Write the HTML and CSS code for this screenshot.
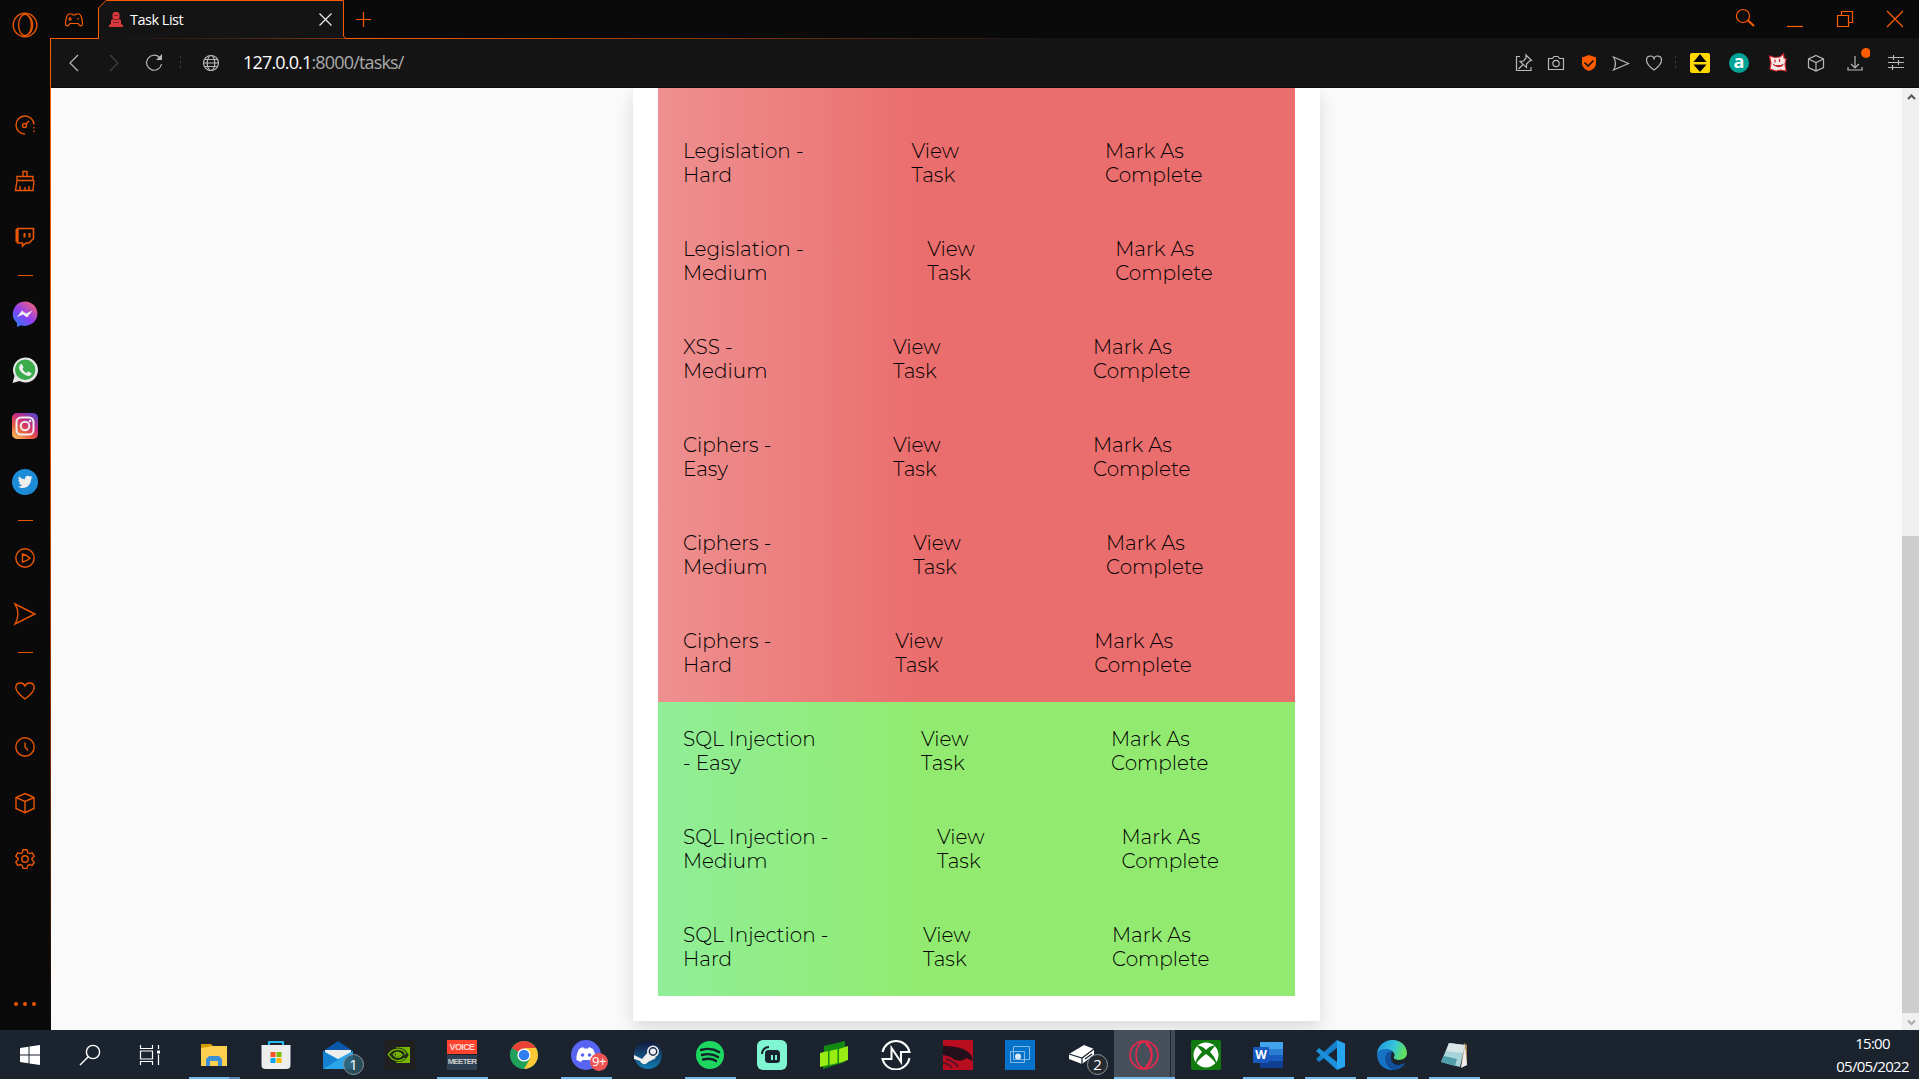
FILE: index.html
```html
<!DOCTYPE html>
<html lang="en">
<head>
<meta charset="utf-8">
<title>Task List</title>
<link rel="stylesheet" href="styles.css">
</head>
<body>
<div class="browser">
  <nav class="sidebar">
    <div class="side-logo"><svg width="26" height="26" viewBox="0 0 26 26"><circle cx="13" cy="13" r="11.8"/><ellipse cx="13" cy="13" rx="6.4" ry="10.6"/><path d="M16 3.500C22 7 22 19 16 22.500"/></svg></div>
    <div class="side-item"><svg width="22" height="22" viewBox="0 0 22 22"><path d="M11 20A9 9 0 1 1 20 10.500" /><path d="M20 13v1.500M20 16.500v1.500" /><circle cx="10.500" cy="11.500" r="2"/><path d="M12 10l3-3"/></svg></div>
    <div class="side-item"><svg width="22" height="22" viewBox="0 0 22 22"><path d="M9 6V1.500h4V6M3 6.500h16v4H3zM3 10.500L1.500 20.500H19L20 10.500M6 20v-4M11 20v-3M15 20v-4"/></svg></div>
    <div class="side-item"><svg width="22" height="22" viewBox="0 0 22 22"><path d="M3.500 2.500h16v10l-4.500 4.500H12l-3.500 3v-3h-5z" stroke-width="1.600"/><path d="M3 3v13" stroke-width="3"/><path d="M10.500 7v4.500M15.500 7v4.500" stroke-width="2"/></svg></div>
    <div class="side-rule side-rule-tall"></div>
    <div class="side-item"><svg class="brand" width="26" height="26" viewBox="0 0 26 26"><defs><linearGradient id="msg" x1="0" y1="1" x2=".8" y2="0"><stop offset="0" stop-color="#1689f5"/><stop offset=".5" stop-color="#8b3ff5"/><stop offset="1" stop-color="#f4627a"/></linearGradient></defs><path d="M13 .5a12.500 12.200 0 1 1-4 23.800L5 26v-4A12.300 12.300 0 0 1 13 .5z" fill="url(#msg)"/><path d="M5 16l5-6.500 4 3 6.500-3-5.500 7-4-3z" fill="#eee"/></svg></div>
    <div class="side-item"><svg class="brand" width="26" height="26" viewBox="0 0 26 26"><path d="M.5 26l2-7A12.500 12.500 0 1 1 7.500 24z" fill="#e8e8e8"/><circle cx="13.200" cy="12.800" r="10.200" fill="#3bab4b"/><path d="M8 7.500l2-.5 1.500 3.500-1 1.500c1 2 2 3 4 4l1.500-1.500 3.500 1.500c0 3-3 3.500-5 2.500-4-1.500-7.500-5-7.500-8z" fill="#eee"/></svg></div>
    <div class="side-item"><svg class="brand" width="26" height="26" viewBox="0 0 26 26"><defs><linearGradient id="ig" x1=".1" y1="1" x2=".8" y2="0"><stop offset="0" stop-color="#f7c15a"/><stop offset=".35" stop-color="#ea5a40"/><stop offset=".65" stop-color="#c62c83"/><stop offset="1" stop-color="#5f45c4"/></linearGradient></defs><rect width="26" height="26" rx="5" fill="url(#ig)"/><g fill="none" stroke="#eee" stroke-width="2"><rect x="4.500" y="4.500" width="17" height="17" rx="4.500"/><circle cx="13" cy="13" r="4.300"/></g><circle cx="18" cy="8" r="1.300" fill="#eee"/></svg></div>
    <div class="side-item"><svg class="brand" width="26" height="26" viewBox="0 0 26 26"><circle cx="13" cy="13" r="13" fill="#1d8cd8"/><path d="M6 17.500c2 0 3-.5 4-1.500-1.500 0-2.500-1-2.800-2l1.300-.2C7 13 6.300 12 6.400 10.500l1.200.4C6.500 10 6.300 8.500 7 7.200c1.600 2 3.600 3 6 3.100C12.500 7 16 5.500 18 7.600L20 7l-1 1.700 1.700-.4-1.600 1.700C19.300 16 13 22 6 17.500z" fill="#eee"/></svg></div>
    <div class="side-rule"></div>
    <div class="side-item"><svg width="22" height="22" viewBox="0 0 22 22"><circle cx="11" cy="11" r="9.200"/><path d="M8.500 7v8q4-.8 7.500-3.800Q12.500 8 8.500 7z"/></svg></div>
    <div class="side-item"><svg width="24" height="24" viewBox="0 0 24 24"><path d="M2 2L22 12 2 22q6-10 0-20z"/></svg></div>
    <div class="side-rule side-rule-low"></div>
    <div class="side-item"><svg width="22" height="22" viewBox="0 0 22 22"><path d="M11 19C7 16 1.800 12 1.800 7.500 1.800 2 9 1.500 11 6c2-4.500 9.200-4 9.200 1.500C20.200 12 15 16 11 19z"/></svg></div>
    <div class="side-item"><svg width="22" height="22" viewBox="0 0 22 22"><circle cx="11" cy="11" r="9.200"/><path d="M11 6.500V11l3 3.500"/></svg></div>
    <div class="side-item"><svg width="22" height="22" viewBox="0 0 22 22"><path d="M11 1.500l9 4v11l-9 4.200-9-4.200v-11zM2 5.500l9 4 9-4M11 9.500v11"/></svg></div>
    <div class="side-item"><svg width="22" height="22" viewBox="0 0 22 22"><circle cx="11" cy="11" r="3.200"/><path d="M9 1.800h4l.8 3 1.400.8 3-.8 2 3.400-2.200 2.200v1.400l2.200 2.200-2 3.400-3-.8-1.400.8-.8 3H9l-.8-3-1.400-.8-3 .8-2-3.400L4 11.800v-1.400L1.800 8.200l2-3.400 3 .8 1.400-.8z"/></svg></div>
    <div class="side-dots"><i></i><i></i><i></i></div>
  </nav>

  <div class="window">
    <header class="tabbar">
      <div class="gx-tab"><svg width="20" height="16" viewBox="0 0 20 16"><path d="M5 2h3l1 1h2l1-1h3c2 0 3.500 6 3.500 9.500 0 3.500-3 3-4.500 0H6c-1.500 3-4.500 3.500-4.500 0C1.500 8 3 2 5 2z"/><path d="M6 5v4M4 7h4M13 7h2" /></svg></div>
      <div class="tab">
        <svg class="tab-shape" width="246" height="39" viewBox="0 0 246 39"><path d="M.5 39V8L8 .5h237.500V36l2 2.500" fill="#141414" stroke="#ff5c00"/></svg>
        <svg class="favicon" width="14" height="15" viewBox="0 0 14 15"><path d="M5 0h4l1.500 2v3L10 7l2 1v4l2 1v2H0v-2l2-1V8l2-1-.5-2V2z" fill="#d8393f"/><path d="M5 3.500h4M4 7.500h6M4 10.500h6" stroke="#7d1f25"/></svg>
        <span class="tab-title">Task List</span>
        <svg class="tab-close" width="13" height="13" viewBox="0 0 13 13"><path d="M.5.500l12 12M12.500.500l-12 12"/></svg>
      </div>
      <div class="new-tab"><svg width="15" height="15" viewBox="0 0 15 15"><path d="M7.500 0v15M0 7.500h15"/></svg></div>
      <div class="window-buttons">
        <svg width="50" height="38" viewBox="0 0 50 38"><circle cx="23" cy="16" r="6.500"/><path d="M28 20.500l6 5.500" stroke-width="2"/></svg>
        <svg width="50" height="38" viewBox="0 0 50 38"><path d="M17 26.500h16"/></svg>
        <svg width="50" height="38" viewBox="0 0 50 38"><path d="M17.500 15.500h11v11h-11zM21.500 15.500v-4h11v11h-4"/></svg>
        <svg width="50" height="38" viewBox="0 0 50 38"><path d="M17 11l16 16M33 11L17 27"/></svg>
      </div>
    </header>

    <div class="toolbar">
      <div class="nav-tools">
        <svg width="20" height="20" viewBox="0 0 20 20"><path d="M14 2L6 10l8 8"/></svg>
        <svg class="dim" width="20" height="20" viewBox="0 0 20 20"><path d="M6 2l8 8-8 8"/></svg>
        <svg width="20" height="20" viewBox="0 0 20 20"><path d="M15.500 4.500A7.500 7.500 0 1 0 17.500 11" /><path d="M12 7h6V1z" fill="#b8b8b8" stroke="none"/></svg>
        <span class="separator"></span>
        <svg width="20" height="20" viewBox="0 0 20 20"><circle cx="10" cy="10" r="7.500"/><ellipse cx="10" cy="10" rx="3.800" ry="7.500"/><path d="M3.500 6.500h13M2.500 10h15M3.500 13.500h13"/></svg>
      </div>
      <div class="address"><b>127.0.0.1</b>:8000/tasks/</div>
      <div class="extensions">
        <svg width="20" height="20" viewBox="0 0 20 20"><path d="M6 3.500H2.500v14H17V14M12 2l5.500 5.500-2 .5-3 3v3.500L6 8.500l3.500-.5 2.500-3zM9 11.500L4.500 16"/></svg>
        <svg width="20" height="20" viewBox="0 0 20 20"><path d="M2.500 5.500h4l1.500-2h4l1.500 2h4v11h-15z"/><circle cx="10" cy="10.500" r="3.200"/></svg>
        <svg width="20" height="20" viewBox="0 0 20 20"><path d="M10 2l7 2.500v6c0 4-4 6.500-7 7.500-3-1-7-3.500-7-7.500v-6z" fill="#ff5c00" stroke="none"/><path d="M5.500 9.500l3.500 3.500 5.500-5.500" stroke="#141414" stroke-width="1.700"/></svg>
        <svg width="20" height="20" viewBox="0 0 20 20"><path d="M2.500 4l15 6.500-15 6.500q4-6.500 0-13z"/></svg>
        <svg width="20" height="20" viewBox="0 0 20 20"><path d="M10 17C6.500 14.500 2.500 11 2.500 7 2.500 2 9 2 10 5.500 11 2 17.500 2 17.500 7c0 4-4 7.500-7.500 10z"/></svg>
        <span class="separator"></span>
        <svg width="20" height="20" viewBox="0 0 20 20"><rect width="20" height="20" rx="2" fill="#ffd900" stroke="none"/><path d="M3.500 9L10 1l6.500 8zM3.500 11.500h13L10 19z" fill="#000" stroke="none"/></svg>
        <div class="badge-a">a</div>
        <svg width="20" height="20" viewBox="0 0 20 20"><path d="M1.500 3l5 1.500L12 4l3.500-3 .5 4 2 1-1 5 1 7-5-1-5 1-6-2 1-6z" fill="#f8e9e8" stroke="#d92b32"/><path d="M7 6.500v3M11.500 6v3M5 11c3 4 9 3 10 0M6 12.500h8" stroke="#b92a31"/></svg>
        <svg width="20" height="20" viewBox="0 0 20 20"><path d="M10 2.500l7.500 3.500v8.500L10 18l-7.500-3.500V6zM2.500 6l7.500 3.500L17.500 6M10 9.500V18"/></svg>
        <svg width="30" height="32" viewBox="0 0 30 32"><path d="M15 9v12M11 17l4 4 4-4M8 20v3h14V20"/><circle cx="26" cy="6" r="5" fill="#ff5c00" stroke="none"/></svg>
        <svg width="20" height="20" viewBox="0 0 20 20"><path d="M2 4.500h16M2 9.500h16M2 14.500h16M7.500 2v5M12.500 7v5M6.500 12v5"/></svg>
      </div>
    </div>

    <div class="viewport">
      <main class="page">
        <section class="card">
          <ul class="task-list">
            <li class="task spacer"></li>
            <li class="task cols-a"><span>Legislation -<br>Hard</span><a>View<br>Task</a><a>Mark As<br>Complete</a></li>
            <li class="task cols-b"><span>Legislation -<br>Medium</span><a>View<br>Task</a><a>Mark As<br>Complete</a></li>
            <li class="task cols-c"><span>XSS -<br>Medium</span><a>View<br>Task</a><a>Mark As<br>Complete</a></li>
            <li class="task cols-c"><span>Ciphers -<br>Easy</span><a>View<br>Task</a><a>Mark As<br>Complete</a></li>
            <li class="task cols-d"><span>Ciphers -<br>Medium</span><a>View<br>Task</a><a>Mark As<br>Complete</a></li>
            <li class="task cols-e"><span>Ciphers -<br>Hard</span><a>View<br>Task</a><a>Mark As<br>Complete</a></li>
            <li class="task done cols-f"><span>SQL Injection<br>- Easy</span><a>View<br>Task</a><a>Mark As<br>Complete</a></li>
            <li class="task done cols-g"><span>SQL Injection -<br>Medium</span><a>View<br>Task</a><a>Mark As<br>Complete</a></li>
            <li class="task done cols-h"><span>SQL Injection -<br>Hard</span><a>View<br>Task</a><a>Mark As<br>Complete</a></li>
          </ul>
        </section>
      </main>
      <div class="scrollbar">
        <svg width="17" height="17" viewBox="0 0 17 17"><path d="M6 11l3.500-3.500L13 11" stroke="#555"/></svg>
        <div class="thumb"></div>
        <svg width="17" height="17" viewBox="0 0 17 17"><path d="M6 7.500L9.500 11 13 7.500" stroke="#aaa"/></svg>
      </div>
    </div>
  </div>
</div>

<footer class="taskbar">
  <div class="sys"><svg width="20" height="20" viewBox="0 0 20 20"><path d="M0 3l8.500-1.200v7.700H0zM9.500 1.600L20 0v9.500H9.500zM0 10.500h8.500v7.700L0 17zM9.500 10.500H20V20L9.500 18.400z" fill="#fff"/></svg></div>
  <div class="sys"><svg width="22" height="22" viewBox="0 0 22 22" fill="none" stroke="#fff" stroke-width="1.400"><circle cx="14" cy="8" r="6.600"/><path d="M9.500 12.500L1 21"/></svg></div>
  <div class="sys"><svg width="22" height="20" viewBox="0 0 22 20" fill="none" stroke="#fff" stroke-width="1.200"><path d="M1.500 0v3.500h12V0M1.500 6h12v8h-12zM1.500 20v-3.500h12V20M19.500 0v4M19.500 9.500V20"/><path d="M18 5.500h3v3h-3z" fill="#fff" stroke="none"/></svg></div>
  <div class="app running grouped"><svg width="28" height="24" viewBox="0 0 28 24"><path d="M1 1h10l2 2v3H1z" fill="#d79a00"/><path d="M1 5l12-2h14v20H1z" fill="#ffcf4f"/><path d="M6 23v-7l3-3h10l3 3v7h-4v-5h-8v5z" fill="#3d8fd6"/></svg></div>
  <div class="app"><svg width="30" height="30" viewBox="0 0 30 30"><path d="M8 7V2h14v5" fill="none" stroke="#27b5ef" stroke-width="2"/><path d="M.5 5h29v20q0 4-4 4h-21q-4 0-4-4z" fill="#ededed"/><path d="M9.500 12h5v5h-5z" fill="#f25022"/><path d="M15.500 12h5v5h-5z" fill="#7fba00"/><path d="M9.500 18h5v5h-5z" fill="#00a4ef"/><path d="M15.500 18h5v5h-5z" fill="#ffb900"/></svg></div>
  <div class="app"><svg width="30" height="28" viewBox="0 0 30 28"><path d="M0 10L15 0l15 10z" fill="#0b56a8"/><path d="M2 9h26v10H2z" fill="#eee"/><path d="M0 10l15 8 15-8v18H0z" fill="#2ba5ea"/><path d="M0 10l15 9-15 9z" fill="#1580d0"/></svg><span class="count">1</span></div>
  <div class="app"><svg width="30" height="30" viewBox="0 0 30 30"><path d="M0 0h30v30H0z" fill="#202020"/><path d="M11 7h14v16H11z" fill="#76b900"/><path d="M3 15c5-8 15-8 19 0-4 7-14 8-19 0zm4 0c3-5 9-5 11 0-3 4-8 4-11 0z" fill="none" stroke="#1e2a14" stroke-width="3"/><path d="M3 15c5-8 15-7 18-1M4 15c4 7 12 7 16 3M8 15c3-4 7-3 9 0-2 3-6 3-8 0" fill="none" stroke="#76b900" stroke-width="1.500"/></svg></div>
  <div class="app running"><div class="voice"><span>VOICE</span><span>MEETER</span></div></div>
  <div class="app"><svg width="28" height="28" viewBox="0 0 28 28"><circle cx="14" cy="14" r="14" fill="#1fa15d"/><path d="M14 14L1.900 7A14 14 0 0 1 26.100 7z" fill="#ea4335"/><path d="M14 7h12.100A14 14 0 0 1 14 28l6-10.500z" fill="#fcc934"/><circle cx="14" cy="14" r="6.600" fill="#fff"/><circle cx="14" cy="14" r="5.300" fill="#2f7ef0"/></svg></div>
  <div class="app running"><svg width="30" height="30" viewBox="0 0 30 30"><circle cx="15" cy="15" r="15" fill="#5865f2"/><path d="M8 9l4-2 1 1.500h4L18 7l4 2c2 4 3 8 2.500 11L20 22l-1.500-2h-7L10 22l-4.500-2C5 17 6 13 8 9z" fill="#fff"/><circle cx="11.500" cy="15" r="1.800" fill="#5865f2"/><circle cx="18.500" cy="15" r="1.800" fill="#5865f2"/></svg><span class="count alert">9+</span></div>
  <div class="app"><svg width="28" height="28" viewBox="0 0 28 28"><defs><linearGradient id="st" x2="0" y2="1"><stop stop-color="#13183c"/><stop offset="1" stop-color="#137cb3"/></linearGradient></defs><circle cx="14" cy="14" r="14" fill="url(#st)"/><path d="M0 14l8 4 6-7 8 6-8 4c-2 3-6 3-8-1l-6-2z" fill="#eee"/><circle cx="19" cy="10.500" r="5.200" fill="#13284c" stroke="#eee" stroke-width="1.600"/><circle cx="19" cy="10.500" r="3" fill="#eee"/></svg></div>
  <div class="app running"><svg width="28" height="28" viewBox="0 0 28 28"><circle cx="14" cy="14" r="14" fill="#1ed760"/><path d="M5 9q10-3 18 2M6 14q9-2.500 16 2M7 18.500q8-2 13 1.500" fill="none" stroke="#14202a" stroke-width="2.400" stroke-linecap="round"/></svg></div>
  <div class="app"><svg width="30" height="30" viewBox="0 0 30 30"><rect width="30" height="30" rx="6" fill="#80f5d2"/><rect x="8" y="10" width="15" height="13" rx="3.500" fill="#17242d"/><path d="M5 14c0-4 3-7 7-7" fill="none" stroke="#17242d" stroke-width="2"/><path d="M15 15v5M19 15v5" stroke="#80f5d2" stroke-width="2"/></svg></div>
  <div class="app"><svg width="30" height="30" viewBox="0 0 30 30"><path d="M5 6l21-5v21L4 29z" fill="#128a12"/><path d="M1 13l8-2v14l-8 2zM10.500 11l8-2v14l-8 2zM20 9l9-3v14l-9 3z" fill="#9aed12"/></svg></div>
  <div class="app"><svg width="30" height="30" viewBox="0 0 30 30" fill="none" stroke="#fff" stroke-width="2"><path d="M1.500 12A13.800 13.800 0 0 1 28.500 12H20v10L10.500 8v11H1.500A13.800 13.800 0 0 0 28.500 18"/></svg></div>
  <div class="app"><svg width="30" height="30" viewBox="0 0 30 30"><path d="M0 0h30v30H0z" fill="#b80e20"/><path d="M0 6c12 0 23 2 28 9l2 6-7-3c-4 5-13 2-15-1L0 15z" fill="#24101a"/><path d="M3 19q8 2 12 8M0 23q5 0 9 5" stroke="#5d1025" stroke-width="2" fill="none"/></svg></div>
  <div class="app"><svg width="30" height="30" viewBox="0 0 30 30"><path d="M0 0h30v30H0z" fill="#0673cb"/><g fill="none" stroke="#84b9e8"><path d="M8.500 6.500h16v13h-16z"/><path d="M5.500 11.500h14v11h-14z"/></g><circle cx="13" cy="16.500" r="3" fill="#d7e9f8"/></svg></div>
  <div class="app"><svg width="28" height="22" viewBox="0 0 28 22"><path d="M1 10L16 1l10 4v6L14 20 1 15z" fill="#fff"/><path d="M1 10l13 4 12-9M14 14v6M17 15l7-5" fill="none" stroke="#1a242f" stroke-width="1.300"/></svg><span class="count dark">2</span></div>
  <div class="app running active"><svg width="30" height="30" viewBox="0 0 30 30" fill="none" stroke="#e8274b" stroke-width="1.600"><circle cx="15" cy="15" r="14"/><ellipse cx="15" cy="15" rx="8" ry="13"/><path d="M17 4c7 5 7 17 0 22"/></svg></div>
  <div class="app"><svg width="30" height="30" viewBox="0 0 30 30"><rect width="30" height="30" rx="2" fill="#107c10"/><circle cx="15" cy="15" r="12.500" fill="#fff"/><path d="M6 6c4-1 7 2 9 4 2-2 5-5 9-4l-5 6c4 4 7 9 6 12-2-4-6-7-10-10C11 17 7 20 5 24c-1-3 2-8 6-12z" fill="#107c10"/></svg></div>
  <div class="app running"><svg width="30" height="26" viewBox="0 0 30 26"><path d="M7 0h23v7H7z" fill="#41a5ee"/><path d="M7 7h23v6H7z" fill="#2b7cd3"/><path d="M7 13h23v6H7z" fill="#185abd"/><path d="M7 19h23v7H7z" fill="#103f91"/><rect y="5" width="16" height="16" rx="1" fill="#185abd"/><text x="8" y="17" class="word-mark">W</text></svg></div>
  <div class="app running"><svg width="30" height="30" viewBox="0 0 30 30"><path d="M22 0l8 3.500v23L22 30z" fill="#27a5f0"/><path d="M22 0v8L4 22l-3-3z" fill="#1580cb"/><path d="M22 30v-8L4 8l-3 3z" fill="#1b8fda"/></svg></div>
  <div class="app running"><svg width="30" height="30" viewBox="0 0 30 30"><defs><linearGradient id="ed" x2="1" y2=".3"><stop stop-color="#1d8fdd"/><stop offset=".6" stop-color="#35c5dc"/><stop offset="1" stop-color="#5fe05f"/></linearGradient></defs><path d="M0 14C1-4 29-5 30 13c0 7-8 8-12 6-3-1 1-3-1-6C13 8 3 8 0 14z" fill="url(#ed)"/><path d="M0 14c3-6 12-6 15-3-5 3-4 13 4 14 4 .5 7-.5 9-2-3 5-8 7-13 7C6 30 0 23 0 14z" fill="#1774c4"/><path d="M10 13c-4 6-1 14 6 17 6 0 10-3 12-7-9 5-17 0-13-11-2-.5-4 0-5 1z" fill="#12509c"/></svg></div>
  <div class="app running"><svg width="30" height="28" viewBox="0 0 30 28"><path d="M25 2l3 2v20l-6 2z" fill="#a88244"/><path d="M10 2l16 2-5 22-19-5z" fill="#a7d3da"/><path d="M10 2l16 2-2 8-17-2z" fill="#d9e6e8"/><path d="M5 15l13 3-2 7-14-4z" fill="#4f9da9"/><path d="M26 4l2 20-6 3z" fill="#eee"/></svg></div>
  <div class="clock"><span>15:00</span><span>05/05/2022</span></div>
</footer>
</body>
</html>
```
FILE: styles.css
```css
* { box-sizing: border-box; }
body { margin: 0; width: 1919px; height: 1079px; overflow: hidden; display: flex; flex-direction: column; font-family: "Segoe UI", "Open Sans", "Noto Sans", sans-serif; background: #0a0a0a; }
svg { display: block; flex: none; }
.browser { display: flex; height: 1030px; }

.sidebar { position: relative; width: 51px; display: flex; flex-direction: column; background: #0a0a0a; }
.sidebar::after { content: ""; position: absolute; right: 0; top: 38px; bottom: 0; width: 1px; background: linear-gradient(#ff5c00, #e05200 40%, #4a1d02 85%, #0a0a0a); }
.sidebar svg { fill: none; stroke: #ea5602; stroke-width: 1.4; }
.sidebar svg.brand { stroke: none; }
.side-logo { height: 97px; padding: 12px 0 0 12px; }
.side-item { height: 56px; width: 49px; display: flex; align-items: center; justify-content: center; }
.side-rule { height: 20px; width: 50px; display: flex; align-items: center; justify-content: center; }
.side-rule::before { content: ""; width: 15px; height: 1px; background: #ea5602; }
.side-rule-tall { height: 21px; }
.side-rule-low { height: 21px; }
.side-dots { display: flex; gap: 5px; justify-content: center; width: 50px; margin-top: 115px; }
.side-dots i { width: 4px; height: 4px; border-radius: 50%; background: #ea5602; }

.window { flex: 1; display: flex; flex-direction: column; min-width: 0; }
.tabbar { height: 39px; display: flex; background: linear-gradient(90deg, #ff5c00 0 300px, #141414 1000px) bottom / 100% 1px no-repeat #0a0a0a; }
.tabbar svg { fill: none; stroke: #ff5c00; stroke-width: 1.2; }
.gx-tab { width: 46px; margin-right: 1px; display: flex; align-items: center; justify-content: center; }
.tab { position: relative; width: 246px; padding: 0 12px 1px 11px; display: flex; align-items: center; }
.tab .tab-shape { position: absolute; left: 0; top: 0; overflow: visible; stroke-width: 1; }
.tab .favicon { position: relative; stroke: none; }
.tab-title { position: relative; margin-left: 7px; font-size: 14.5px; color: #fff; letter-spacing: -.5px; white-space: nowrap; }
.tab .tab-close { position: relative; margin-left: auto; stroke: #eee; }
.new-tab { width: 39px; display: flex; align-items: center; justify-content: center; padding-bottom: 1px; }
.window-buttons { margin-left: auto; margin-right: -1px; display: flex; }

.toolbar { height: 49px; display: flex; align-items: center; background: #141414; border-bottom: 1px solid #0c0c0c; padding-bottom: 1px; }
.toolbar svg { fill: none; stroke: #b8b8b8; stroke-width: 1.2; }
.toolbar svg.dim { stroke: #444; }
.nav-tools { display: grid; grid-template-columns: 40px 39px 41px 12px 50px; justify-items: center; align-items: center; padding-left: 3px; }
.separator { width: 1px; height: 13px; background: repeating-linear-gradient(#3d3d46 0 2px, transparent 2px 5px); }
.address { margin-left: 7px; padding-bottom: 1px; font-size: 18px; letter-spacing: -.83px; color: #aaa; white-space: nowrap; }
.address b { font-weight: 400; color: #fff; }
.extensions { margin-left: auto; display: grid; grid-template-columns: repeat(5, 32.5px) 10px 40px 38px 39px 37px 42px 40px; justify-items: center; align-items: center; height: 32px; margin-right: 3px; }
.badge-a { width: 20px; height: 20px; border-radius: 50%; background: #00a396; color: #fff; font: 700 18px/17px "Open Sans", sans-serif; text-align: center; }

.viewport { flex: 1; display: flex; background: #fafafa; min-height: 0; }
.page { flex: 1; overflow: hidden; padding-left: 582px; }
.card { width: 687px; height: 933px; padding: 0 25px 25px; background: #fff; box-shadow: 0 10px 20px rgba(0,0,0,.1), 0 0 12px rgba(0,0,0,.04); }
.task-list { margin: 0; padding: 0; list-style: none; }
.task { height: 98px; padding: 0 25px; display: grid; align-items: center; background: linear-gradient(90deg, #ee9090, #eb6e6e 41%); color: #000; font: 300 20px/24px Montserrat, "Open Sans", sans-serif; }
.task.spacer { height: 26px; }
.task.done { background: linear-gradient(90deg, #90ee98, #92eb70 41%); }
.cols-a { grid-template-columns: 228.5px 193.5px 1fr; }
.cols-b { grid-template-columns: 244.2px 188px 1fr; }
.cols-c { grid-template-columns: 210px 200px 1fr; }
.cols-d { grid-template-columns: 230.2px 192.8px 1fr; }
.cols-e { grid-template-columns: 212.2px 199px 1fr; }
.cols-f { grid-template-columns: 238px 190px 1fr; }
.cols-g { grid-template-columns: 254px 184.5px 1fr; }
.cols-h { grid-template-columns: 240px 189px 1fr; }

.scrollbar { width: 17px; background: #f0f0f0; display: flex; flex-direction: column; }
.scrollbar svg { fill: none; stroke-width: 2; }
.thumb { flex: 1; margin-top: 431px; background: #cdcdcd; }

.taskbar { height: 49px; display: flex; background: #1a232e; color: #fff; }
.sys { width: 60px; display: flex; align-items: center; justify-content: center; }
.sys + .app { margin-left: 4px; }
.app { position: relative; width: 61px; padding-right: 1px; margin-right: 1px; flex: none; display: flex; align-items: center; justify-content: center; }
.app.running::after { content: ""; position: absolute; bottom: 0; left: 5px; width: 51px; height: 2px; background: #76b9ed; }
.app.grouped::after { background: linear-gradient(90deg, #76b9ed 40px, #5b88b0 40px); }
.app.active { background: linear-gradient(90deg, #47505a 56px, #20262e 56px 57px, #414b56 57px); }
.app.active::after { left: 0; width: 61px; }
.count { position: absolute; left: 35px; top: 24px; width: 21px; height: 21px; border-radius: 50%; border: 1px solid #8b959c; background: #2e5666cc; font-size: 15px; line-height: 18px; text-align: center; }
.count.alert { left: 34px; top: 23px; width: 18px; height: 18px; border: 0; background: #ed5555; font-size: 13px; line-height: 17px; letter-spacing: -.5px; }
.count.dark { background: #262b31; }
.voice { width: 30px; height: 30px; display: flex; flex-direction: column; gap: 1px; font: 700 9px/14px "Liberation Sans", sans-serif; text-align: center; letter-spacing: -.6px; }
.voice span { flex: 1; background: #ff432f; color: #ffd9d2; overflow: hidden; }
.voice span + span { background: #2d3f50; color: #ccc; font-size: 8px; letter-spacing: -.8px; }
.word-mark { fill: #fff; font: 700 12px "Open Sans", sans-serif; text-anchor: middle; }
.clock { margin-left: auto; width: 91px; margin-right: 1px; display: flex; flex-direction: column; align-items: center; font-size: 15px; line-height: 23px; padding: 2px 0 0; letter-spacing: -.7px; }
```
